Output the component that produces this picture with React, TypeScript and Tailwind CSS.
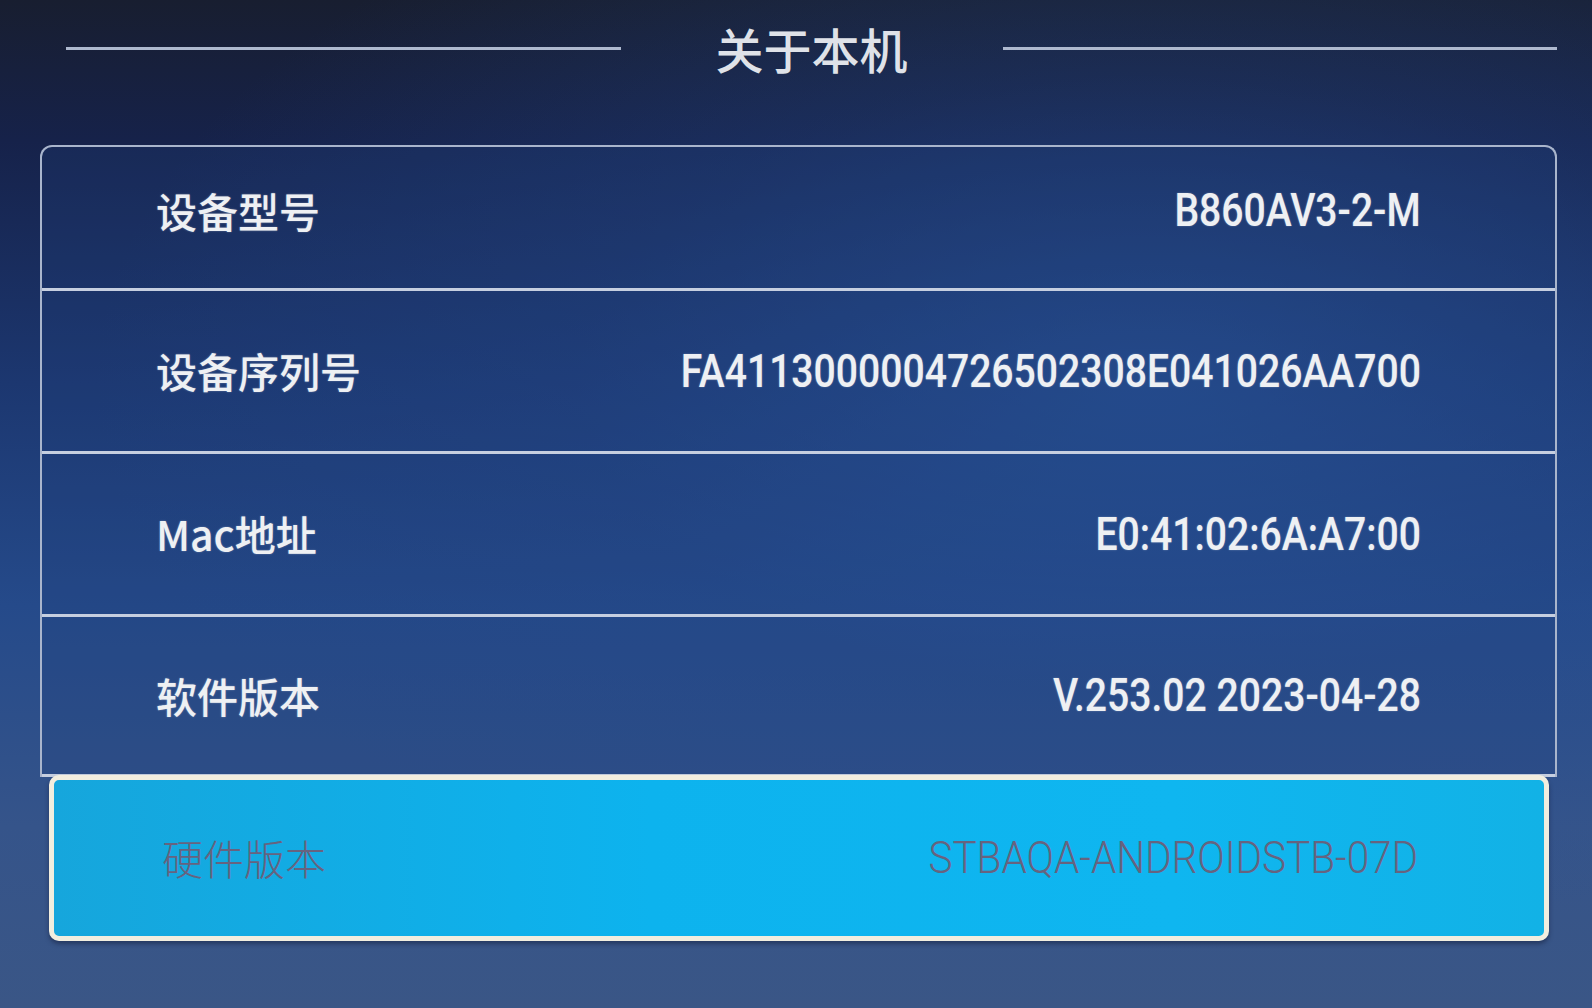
const rows = [
  { label: "设备型号", value: "B860AV3-2-M", h: "h-[144px] pb-[14px]" },
  { label: "设备序列号", value: "FA4113000004726502308E041026AA700", h: "h-[163px]" },
  { label: "Mac地址", value: "E0:41:02:6A:A7:00", h: "h-[163px]" },
  { label: "软件版本", value: "V.253.02 2023-04-28", h: "h-[160px]" },
];

const cjk = "font-['Noto_Sans_CJK_SC','Noto_Sans',sans-serif]";
const latin = "font-['Roboto','Noto_Sans_CJK_SC',sans-serif]";

function InfoRow({ label, value, h }: { label: string; value: string; h: string }) {
  return (
    <div
      className={`flex items-center justify-between border-b-[3px] border-[#c6cfe0] pl-[114px] pr-[134px] ${h}`}
    >
      <span
        className={`${cjk} text-[41px] font-medium text-[#eef0f3] [text-shadow:0_0_2px_rgba(255,255,255,0.35)]`}
      >
        {label}
      </span>
      <span
        className={`${latin} inline-block origin-right scale-x-[0.85] text-[46px] font-medium text-[#eef0f3] [text-shadow:0_0_2px_rgba(255,255,255,0.35)]`}
      >
        {value}
      </span>
    </div>
  );
}

export default function App() {
  return (
    <div className="h-[1008px] w-[1592px] overflow-hidden bg-[linear-gradient(180deg,#181e30_0%,#16224a_14%,#1c3770_38%,#254a8a_60%,#35548a_82%,#3a5686_100%)]">
      <div className="h-full w-full bg-[radial-gradient(ellipse_at_72%_38%,rgba(45,95,170,0.55)_0%,rgba(40,80,150,0.25)_35%,rgba(0,0,0,0)_65%)]">
        {/* header */}
        <div className="flex h-[96px] items-center pl-[66px] pr-[35px]">
          <div className="h-[3px] flex-1 bg-[#aeb9cf]" />
          <h1 className={`${cjk} mx-[95px] text-[48px] font-medium leading-none text-[#dfe2e8]`}>
            关于本机
          </h1>
          <div className="h-[3px] flex-1 bg-[#aeb9cf]" />
        </div>

        <div className="ml-[40px] mr-[35px] mt-[49px] flex flex-col">
          {/* info rows */}
          <div className="flex flex-col rounded-t-[12px] border-x-2 border-t-2 border-[#a9b5cc] bg-[#1f3f7c]/25">
            {rows.map((r) => (
              <InfoRow key={r.label} {...r} />
            ))}
          </div>

          {/* focused row */}
          <div className="-mt-[2px] ml-[9px] mr-[8px] flex h-[166px] items-center justify-between rounded-[10px] border-[5px] border-[#f2eedf] bg-[linear-gradient(90deg,#16a6dc_0%,#0db3ee_40%,#0fb6f0_75%,#12b2e6_100%)] pl-[108px] pr-[126px] shadow-[0_3px_4px_rgba(20,30,60,0.5)]">
            <span className={`${cjk} text-[41px] font-light text-[#67637f]`}>硬件版本</span>
            <span
              className={`${latin} inline-block origin-right scale-x-[0.9] text-[45px] font-light text-[#67637f]`}
            >
              STBAQA-ANDROIDSTB-07D
            </span>
          </div>
        </div>
      </div>
    </div>
  );
}
